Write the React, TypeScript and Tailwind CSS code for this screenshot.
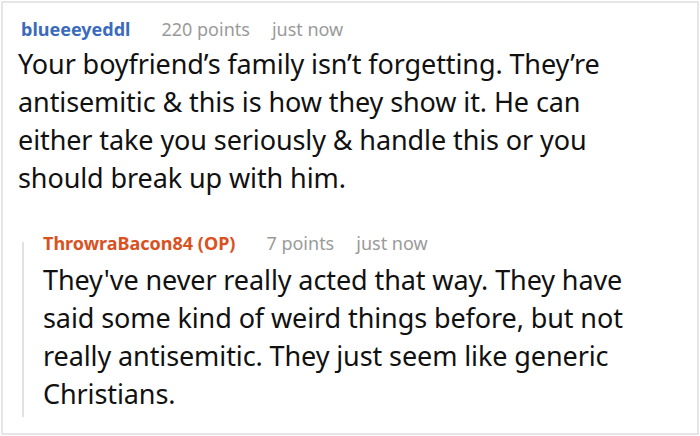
import React from "react";

export default function App() {
  return (
    <div className="w-[700px] h-[436px] bg-white p-px" style={{ fontFamily: '"Noto Sans", "Open Sans", sans-serif' }}>
      <div className="w-[698px] h-[434px] border-2 border-[#e6e6e6] pt-[13px] pl-[15px]">
        <div className="flex items-baseline h-[27px] leading-[27px] text-[18px]">
          <span className="ml-[3px] font-bold text-[#3a6bbd]">blueeeyeddl</span>
          <span className="ml-[31px] text-[#9a9a9a]">220 points</span>
          <span className="ml-[22px] text-[#9a9a9a]">just now</span>
        </div>
        <p className="mt-[2px] text-[27px] leading-[38px] tracking-[-0.1px] text-[#111111]">
          Your boyfriend’s family isn’t forgetting. They’re<br />
          antisemitic &amp; this is how they show it. He can<br />
          either take you seriously &amp; handle this or you<br />
          should break up with him.
        </p>
        <div className="mt-[33px] ml-[4px] flex">
          <div className="w-[2px] mt-[12px] bg-[#e2e2e2] shrink-0" />
          <div className="pl-[19px] pb-[4px]">
            <div className="flex items-baseline h-[27px] leading-[27px] text-[18px]">
              <span className="font-bold text-[#d9521f]">ThrowraBacon84 (OP)</span>
              <span className="ml-[31px] text-[#9a9a9a]">7 points</span>
              <span className="ml-[22px] text-[#9a9a9a]">just now</span>
            </div>
            <p className="mt-[4px] text-[27px] leading-[38px] tracking-[-0.1px] text-[#111111]">
              They've never really acted that way. They have<br />
              said some kind of weird things before, but not<br />
              really antisemitic. They just seem like generic<br />
              Christians.
            </p>
          </div>
        </div>
      </div>
    </div>
  );
}
